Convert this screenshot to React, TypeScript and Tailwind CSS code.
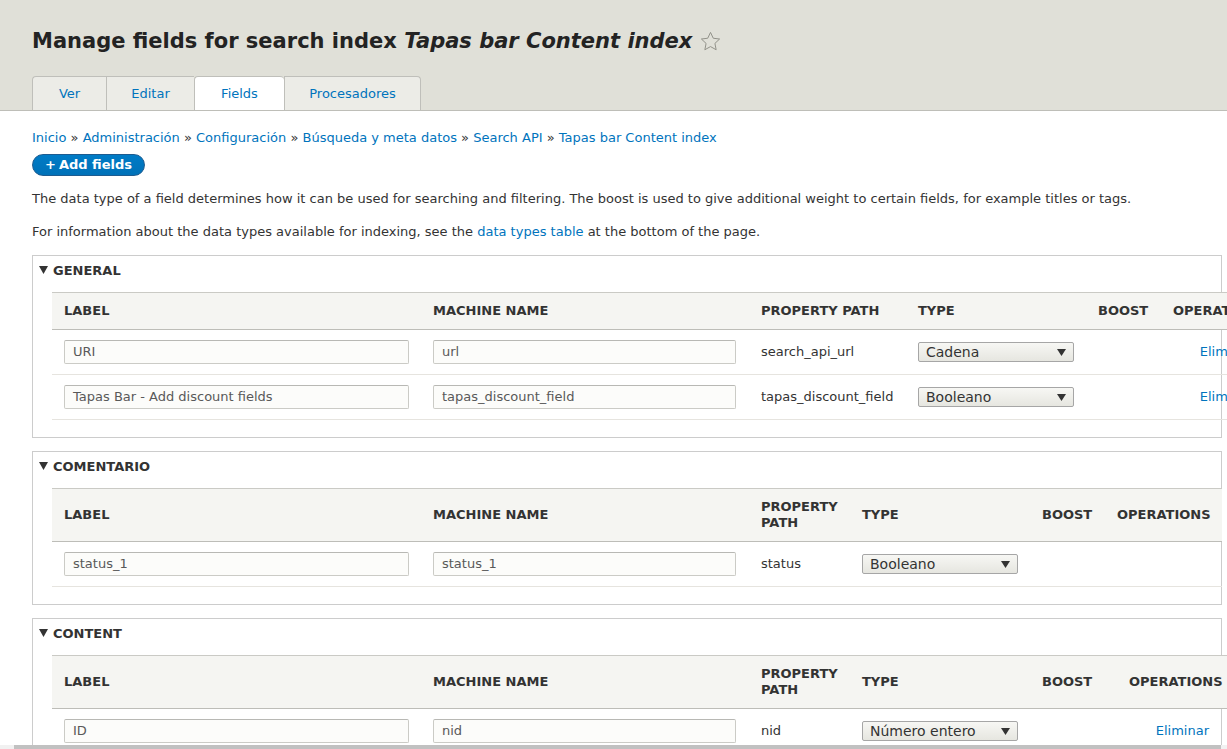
import React from "react";

type Row = {
  label: string;
  machine: string;
  path: string;
  type: string;
  remove?: boolean;
};

type Section = {
  title: string;
  cols: string;
  tall: boolean;
  rows: Row[];
};

const sections: Section[] = [
  {
    title: "General",
    cols: "grid-cols-[369px_328px_157px_180px_75px_117px]",
    tall: false,
    rows: [
      { label: "URI", machine: "url", path: "search_api_url", type: "Cadena", remove: true },
      {
        label: "Tapas Bar - Add discount fields",
        machine: "tapas_discount_field",
        path: "tapas_discount_field",
        type: "Booleano",
        remove: true,
      },
    ],
  },
  {
    title: "Comentario",
    cols: "grid-cols-[369px_328px_101px_180px_75px_117px]",
    tall: true,
    rows: [{ label: "status_1", machine: "status_1", path: "status", type: "Booleano" }],
  },
  {
    title: "Content",
    cols: "grid-cols-[369px_328px_101px_180px_87px_117px]",
    tall: true,
    rows: [{ label: "ID", machine: "nid", path: "nid", type: "Número entero", remove: true }],
  },
];

const crumbs = [
  "Inicio",
  "Administración",
  "Configuración",
  "Búsqueda y meta datos",
  "Search API",
  "Tapas bar Content index",
];

const tabs = [
  { name: "Ver", w: "w-[74px]", extra: "rounded-tl-[4px]" },
  { name: "Editar", w: "w-[88px]", extra: "" },
  { name: "Fields", w: "w-[90px]", extra: "rounded-t-[4px] bg-white" },
  { name: "Procesadores", w: "w-[137px]", extra: "rounded-tr-[4px] border-r" },
];

function Star() {
  return (
    <svg width="23" height="23" viewBox="0 0 24 24" className="ml-[7px] mt-[1px]">
      <path
        d="M12 2.5l2.9 6.1 6.6.8-4.9 4.6 1.3 6.6L12 17.3l-5.9 3.3 1.3-6.6-4.9-4.6 6.6-.8z"
        fill="none"
        stroke="#8e8e86"
        strokeWidth="1"
        strokeLinejoin="round"
      />
    </svg>
  );
}

function Select({ value }: { value: string }) {
  return (
    <div className="flex h-[20px] w-[156px] items-center justify-between rounded-[2px] border border-[#a6a6a6] bg-gradient-to-b from-[#f7f7f4] to-[#e6e6e0] pl-[7px] pr-[7px] text-[14px] text-[#333]">
      <span>{value}</span>
      <svg width="9" height="7" viewBox="0 0 9 7">
        <path d="M0 0h9L4.5 7z" fill="#333" />
      </svg>
    </div>
  );
}

function Input({ value, w }: { value: string; w: string }) {
  return (
    <div
      className={`flex h-[24px] ${w} items-center rounded-[2px] border border-[#cbcbc6] border-t-[#b8b8b4] bg-[#fcfcfa] pl-[8px] text-[13px] text-[#595959]`}
    >
      {value}
    </div>
  );
}

function FieldTable({ section }: { section: Section }) {
  const head = ["Label", "Machine name", "Property path", "Type", "Boost", "Operations"];
  return (
    <div className="mt-[7px] ml-[19px] w-max">
      <div
        className={`grid ${section.cols} ${section.tall ? "h-[54px]" : "h-[38px]"} border-t border-b border-t-[#cacac5] border-b-[#bdbdb8] bg-[#f5f5f2]`}
      >
        {head.map((h) => (
          <div
            key={h}
            className="flex items-center px-[12px] text-[13px] font-bold uppercase leading-[16px] text-[#333]"
          >
            {h}
          </div>
        ))}
      </div>
      {section.rows.map((r) => (
        <div key={r.machine} className={`grid ${section.cols} h-[45px] border-b border-[#e6e4df]`}>
          <div className="flex items-center pl-[12px] pb-[1px]">
            <Input value={r.label} w="w-[345px]" />
          </div>
          <div className="flex items-center pl-[12px] pb-[1px]">
            <Input value={r.machine} w="w-[303px]" />
          </div>
          <div className="flex items-center pl-[12px] text-[13px] text-[#333]">{r.path}</div>
          <div className="flex items-center pl-[12px]">
            <Select value={r.type} />
          </div>
          <div />
          <div className="flex items-center justify-end pr-[25px] text-[13px] text-[#0074bd]">
            {r.remove ? "Eliminar" : ""}
          </div>
        </div>
      ))}
    </div>
  );
}

function Details({ section, first }: { section: Section; first: boolean }) {
  return (
    <div className={`${first ? "mt-[14px]" : "mt-[13px]"} w-[1190px] border border-[#ccc] pb-[17px]`}>
      <div className="flex h-[29px] items-center pl-[6px] text-[13px] font-bold uppercase text-[#333]">
        <svg width="9" height="8" viewBox="0 0 9 8" className="mr-[5px] mb-[2px]">
          <path d="M0 0h9L4.5 8z" fill="#333" />
        </svg>
        {section.title}
      </div>
      <FieldTable section={section} />
    </div>
  );
}

export default function App() {
  return (
    <div className="relative h-[749px] w-[1227px] overflow-hidden bg-white font-['DejaVu_Sans',sans-serif] text-[#333]">
      <div className="h-[111px] border-b border-[#bebeb8] bg-[#e0e0d8] px-[32px] pt-[28px]">
        <h1 className="flex items-center text-[21px] font-bold leading-[26px] text-[#232323]">
          <span>
            Manage fields for search index <em>Tapas bar Content index</em>
          </span>
          <Star />
        </h1>
        <div className="mt-[22px] flex h-[34px]">
          {tabs.map((t) => (
            <div
              key={t.name}
              className={`flex h-[34px] ${t.w} items-center justify-center border-t border-l border-[#bfbfba] bg-[#ececE7] text-[13px] text-[#0074bd] ${t.extra}`}
            >
              {t.name}
            </div>
          ))}
        </div>
      </div>

      <div className="px-[32px] pt-[18px]">
        <div className="text-[13px] leading-[18px]">
          {crumbs.map((c, i) => (
            <span key={c}>
              {i > 0 && <span className="text-[#333]"> » </span>}
              <span className="text-[#0074bd]">{c}</span>
            </span>
          ))}
        </div>
        <div className="mt-[7px] flex h-[22px] w-[113px] items-center justify-center rounded-full border border-[#1e5c90] bg-gradient-to-b from-[#007bc6] to-[#0071b8] text-[13px] font-bold text-white">
          <span className="mr-[3px]">+</span>Add fields
        </div>
        <p className="mt-[13px] text-[13px] leading-[19px]">
          The data type of a field determines how it can be used for searching and filtering. The
          boost is used to give additional weight to certain fields, for example titles or tags.
        </p>
        <p className="mt-[14px] text-[13px] leading-[19px]">
          For information about the data types available for indexing, see the{" "}
          <span className="text-[#0074bd]">data types table</span> at the bottom of the page.
        </p>
        {sections.map((s, i) => (
          <Details key={s.title} section={s} first={i === 0} />
        ))}
      </div>

      <div className="fixed bottom-0 left-0 flex h-[4px] w-[1227px] bg-[#f1f1f1]">
        <div className="ml-[14px] mr-[6px] h-[4px] flex-1 bg-[#c1c1c1]" />
      </div>
    </div>
  );
}
